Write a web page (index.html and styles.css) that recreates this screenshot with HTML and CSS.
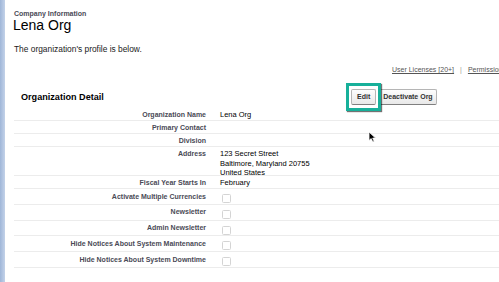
FILE: index.html
```
<!DOCTYPE html>
<html>
<head>
<meta charset="utf-8">
<link rel="stylesheet" href="styles.css">
</head>
<body>
<div class="stripe"></div>
<main class="page">
  <div class="crumb">Company Information</div>
  <h1 class="title">Lena Org</h1>
  <p class="desc">The organization's profile is below.</p>
  <div class="links">
    <a class="link">User Licenses [20+]</a>
    <span class="pipe">|</span>
    <a class="link">Permission Set Licenses</a>
  </div>
  <section class="detail">
    <div class="detail-head">
      <h2 class="detail-title">Organization Detail</h2>
      <div class="buttons">
        <span class="highlight"><button class="btn">Edit</button></span>
        <button class="btn">Deactivate Org</button>
      </div>
    </div>
    <div class="row"><div class="label">Organization Name</div><div class="value">Lena Org</div></div>
    <div class="row"><div class="label">Primary Contact</div><div class="value"></div></div>
    <div class="row"><div class="label">Division</div><div class="value"></div></div>
    <div class="row"><div class="label">Address</div><div class="value address">123 Secret Street<br>Baltimore, Maryland 20755<br>United States</div></div>
    <div class="row"><div class="label">Fiscal Year Starts In</div><div class="value">February</div></div>
    <div class="row check"><div class="label">Activate Multiple Currencies</div><div class="value"><span class="box"></span></div></div>
    <div class="row check"><div class="label">Newsletter</div><div class="value"><span class="box"></span></div></div>
    <div class="row check"><div class="label">Admin Newsletter</div><div class="value"><span class="box"></span></div></div>
    <div class="row check"><div class="label">Hide Notices About System Maintenance</div><div class="value"><span class="box"></span></div></div>
    <div class="row check"><div class="label">Hide Notices About System Downtime</div><div class="value"><span class="box"></span></div></div>
  </section>
  <svg class="cursor" width="9" height="12" viewBox="0 0 9 12"><path d="M1 1 L1 9.5 L3.2 7.6 L4.8 11 L6.2 10.4 L4.7 7.1 L7.6 7.1 Z" fill="#000" stroke="#fff" stroke-width="0.8"/></svg>
</main>
</body>
</html>
```
FILE: styles.css
```
html, body {
  margin: 0;
  padding: 0;
  background: #fff;
  overflow: hidden;
}
body {
  display: flex;
  width: 499px;
  height: 282px;
  font-family: "Liberation Sans", Arial, sans-serif;
  color: #000;
}
.stripe {
  width: 5px;
  flex: none;
  background: linear-gradient(to right, #9fb6d8, #c3d2e9);
}
.page {
  position: relative;
  flex: 1;
  min-width: 0;
  padding: 9px 0 0 9px;
  overflow: hidden;
}
.crumb {
  font-size: 7px;
  font-weight: bold;
  color: #4a4a56;
  line-height: 9px;
}
.title {
  margin: 0;
  font-size: 14px;
  font-weight: normal;
  line-height: 15px;
  margin-left: -1px;
}
.desc {
  margin: 11px 0 0;
  font-size: 8.4px;
  line-height: 10px;
  color: #222;
}
.links {
  margin-top: 11px;
  display: flex;
  gap: 6px;
  padding-left: 378px;
  white-space: nowrap;
  font-size: 7px;
  line-height: 9px;
  color: #555;
}
.link {
  text-decoration: underline;
  color: #555;
}
.pipe {
  color: #999;
}
.detail {
  margin-top: 12px;
}
.detail-head {
  display: grid;
  grid-template-columns: 336px auto;
  align-items: center;
  height: 22px;
}
.detail-title {
  margin: 0;
  padding-left: 7px;
  font-size: 9.1px;
  font-weight: bold;
  line-height: 11px;
  color: #000;
}
.buttons {
  display: flex;
  align-items: center;
  gap: 2px;
}
.highlight {
  display: inline-flex;
  padding: 3px 2px;
  margin: -6px 0;
  border: 3px solid #17b09a;
  box-shadow: 1px 1px 1px rgba(0, 0, 0, 0.55);
  position: relative;
  left: -4px;
  margin-right: -8px;
}
.btn {
  font-family: "Liberation Sans", Arial, sans-serif;
  font-size: 7px;
  font-weight: bold;
  color: #333;
  height: 16px;
  padding: 0 3px;
  border: 1px solid #b5b5b5;
  border-bottom-color: #7f7f7f;
  border-radius: 2px;
  background: linear-gradient(#fdfdfd, #e8e8e8);
  line-height: 14px;
}
.highlight .btn {
  padding: 0 5px;
}
.row {
  display: grid;
  grid-template-columns: 192px 1fr;
  column-gap: 14px;
  border-bottom: 1px solid #ececec;
}
.label {
  text-align: right;
  font-size: 7px;
  font-weight: bold;
  color: #4a4a56;
  line-height: 9px;
  padding: 2px 0 1px;
  white-space: nowrap;
}
.value {
  font-size: 7.5px;
  line-height: 9px;
  padding: 2px 0 1px;
  color: #000;
}
.value.address {
  line-height: 9.5px;
  padding-bottom: 0;
  margin-bottom: -2.5px;
}
.row.check .label {
  padding: 2.5px 0 3.25px;
}
.row.check .value {
  padding: 5px 0 0.75px 2px;
}
.box {
  display: block;
  width: 7px;
  height: 7px;
  border: 1px solid #d4d4d4;
  border-radius: 1.5px;
  background: #fff;
}
.cursor {
  position: absolute;
  left: 363px;
  top: 131px;
}
```
